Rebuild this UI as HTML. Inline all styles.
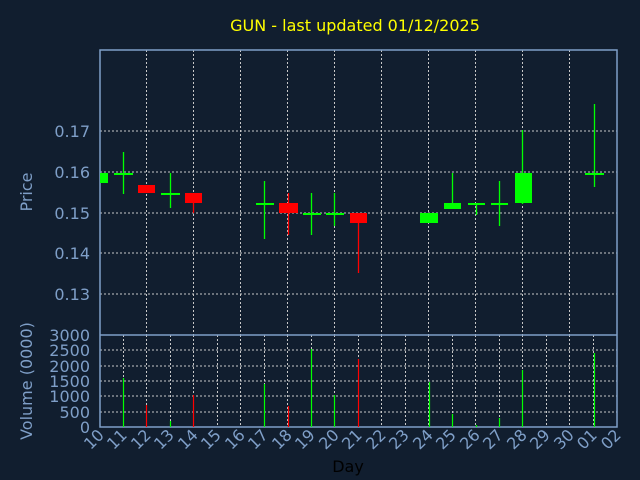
<!DOCTYPE html>
<html><head><meta charset="utf-8"><style>
html,body{margin:0;padding:0;background:#111e2f;}
svg{display:block;font-family:"DejaVu Sans","Liberation Sans",sans-serif;}
</style></head><body>
<svg width="640" height="480" viewBox="0 0 640 480" xmlns="http://www.w3.org/2000/svg">
<rect width="640" height="480" fill="#111e2f"/>
<text x="355" y="31" fill="#ffff00" font-size="16" text-anchor="middle">GUN - last updated 01/12/2025</text>
<g stroke="#c8c8c8" stroke-width="1" stroke-dasharray="2,2" fill="none">
<line x1="100" y1="131" x2="617" y2="131"/><line x1="100" y1="172" x2="617" y2="172"/>
<line x1="100" y1="213" x2="617" y2="213"/><line x1="100" y1="253" x2="617" y2="253"/>
<line x1="100" y1="294" x2="617" y2="294"/>
<line x1="146.5" y1="50" x2="146.5" y2="335"/><line x1="193.5" y1="50" x2="193.5" y2="335"/>
<line x1="240.5" y1="50" x2="240.5" y2="335"/><line x1="287.5" y1="50" x2="287.5" y2="335"/>
<line x1="334.5" y1="50" x2="334.5" y2="335"/><line x1="381.5" y1="50" x2="381.5" y2="335"/>
<line x1="428.5" y1="50" x2="428.5" y2="335"/><line x1="475.5" y1="50" x2="475.5" y2="335"/>
<line x1="522.5" y1="50" x2="522.5" y2="335"/><line x1="569.5" y1="50" x2="569.5" y2="335"/>
<line x1="100" y1="350" x2="617" y2="350"/><line x1="100" y1="366" x2="617" y2="366"/>
<line x1="100" y1="381" x2="617" y2="381"/><line x1="100" y1="396" x2="617" y2="396"/>
<line x1="100" y1="412" x2="617" y2="412"/>
<line x1="123.5" y1="335" x2="123.5" y2="427"/><line x1="146.5" y1="335" x2="146.5" y2="427"/>
<line x1="170.5" y1="335" x2="170.5" y2="427"/><line x1="193.5" y1="335" x2="193.5" y2="427"/>
<line x1="217.5" y1="335" x2="217.5" y2="427"/><line x1="240.5" y1="335" x2="240.5" y2="427"/>
<line x1="264.5" y1="335" x2="264.5" y2="427"/><line x1="287.5" y1="335" x2="287.5" y2="427"/>
<line x1="311.5" y1="335" x2="311.5" y2="427"/><line x1="334.5" y1="335" x2="334.5" y2="427"/>
<line x1="358.5" y1="335" x2="358.5" y2="427"/><line x1="381.5" y1="335" x2="381.5" y2="427"/>
<line x1="405.5" y1="335" x2="405.5" y2="427"/><line x1="428.5" y1="335" x2="428.5" y2="427"/>
<line x1="452.5" y1="335" x2="452.5" y2="427"/><line x1="475.5" y1="335" x2="475.5" y2="427"/>
<line x1="499.5" y1="335" x2="499.5" y2="427"/><line x1="522.5" y1="335" x2="522.5" y2="427"/>
<line x1="546.5" y1="335" x2="546.5" y2="427"/><line x1="569.5" y1="335" x2="569.5" y2="427"/>
<line x1="593.5" y1="335" x2="593.5" y2="427"/>
</g>
<g stroke="#7f9fc8" stroke-width="1.5" fill="none">
<rect x="100" y="50" width="517" height="377"/>
<line x1="100" y1="335" x2="617" y2="335"/>
</g>
<g stroke="#00ff00" stroke-width="1.3">
<line x1="123.5" y1="152" x2="123.5" y2="194"/><line x1="170.5" y1="173" x2="170.5" y2="208"/>
<line x1="264.5" y1="181" x2="264.5" y2="239"/><line x1="311.5" y1="193" x2="311.5" y2="235"/>
<line x1="334.5" y1="193" x2="334.5" y2="226"/><line x1="452.5" y1="173" x2="452.5" y2="209"/>
<line x1="476.5" y1="203" x2="476.5" y2="215"/><line x1="499.5" y1="181" x2="499.5" y2="226"/>
<line x1="522.5" y1="130" x2="522.5" y2="204"/><line x1="594.5" y1="104" x2="594.5" y2="187"/>
</g>
<g fill="#00ff00">
<rect x="100" y="173" width="8" height="10"/>
<rect x="114" y="173" width="19" height="2"/><rect x="161" y="193" width="19" height="2"/>
<rect x="256" y="203" width="18" height="2"/><rect x="303" y="213" width="18" height="2"/>
<rect x="326" y="213" width="18" height="2"/>
<rect x="420" y="213" width="18" height="10"/><rect x="444" y="203" width="17" height="6"/>
<rect x="468" y="203" width="17" height="2"/><rect x="491" y="203" width="17" height="2"/>
<rect x="515" y="173" width="17" height="30"/><rect x="585" y="173" width="19" height="2"/>
</g>
<g stroke="#ff0000" stroke-width="1.3">
<line x1="193.5" y1="193" x2="193.5" y2="213"/><line x1="288.5" y1="193" x2="288.5" y2="235"/>
<line x1="358.5" y1="213" x2="358.5" y2="273"/>
</g>
<g fill="#ff0000">
<rect x="138" y="185" width="17" height="8"/><rect x="185" y="193" width="17" height="10"/>
<rect x="279" y="203" width="19" height="10"/><rect x="350" y="213" width="17" height="10"/>
</g>
<g stroke-width="1.2">
<line x1="123.5" y1="378" x2="123.5" y2="427" stroke="#00ff00"/>
<line x1="146.5" y1="405" x2="146.5" y2="427" stroke="#ff0000"/>
<line x1="170.5" y1="421" x2="170.5" y2="427" stroke="#00ff00"/>
<line x1="193.5" y1="395" x2="193.5" y2="427" stroke="#ff0000"/>
<line x1="264.5" y1="384" x2="264.5" y2="427" stroke="#00ff00"/>
<line x1="288.5" y1="406" x2="288.5" y2="427" stroke="#ff0000"/>
<line x1="311.5" y1="349" x2="311.5" y2="427" stroke="#00ff00"/>
<line x1="334.5" y1="395" x2="334.5" y2="427" stroke="#00ff00"/>
<line x1="358.5" y1="359" x2="358.5" y2="427" stroke="#ff0000"/>
<line x1="429.5" y1="382" x2="429.5" y2="427" stroke="#00ff00"/>
<line x1="452.5" y1="414" x2="452.5" y2="427" stroke="#00ff00"/>
<line x1="476.5" y1="425" x2="476.5" y2="427" stroke="#00ff00"/>
<line x1="499.5" y1="418" x2="499.5" y2="427" stroke="#00ff00"/>
<line x1="522.5" y1="370" x2="522.5" y2="427" stroke="#00ff00"/>
<line x1="594.5" y1="353" x2="594.5" y2="427" stroke="#00ff00"/>
</g>
<g fill="#7f9fc8" font-size="16" text-anchor="end">
<text x="90" y="137">0.17</text><text x="90" y="178">0.16</text><text x="90" y="219">0.15</text>
<text x="90" y="259">0.14</text><text x="90" y="300">0.13</text>
<text x="90" y="341">3000</text><text x="90" y="356">2500</text><text x="90" y="372">2000</text>
<text x="90" y="387">1500</text><text x="90" y="402">1000</text><text x="90" y="418">500</text>
<text x="90" y="433">0</text>
</g>
<text transform="translate(32,192) rotate(-90)" fill="#7f9fc8" font-size="16" text-anchor="middle">Price</text>
<text transform="translate(32,381) rotate(-90)" fill="#7f9fc8" font-size="16" text-anchor="middle">Volume (0000)</text>
<g fill="#7f9fc8" font-size="16" text-anchor="end">
<text transform="translate(105,436) rotate(-45)">10</text><text transform="translate(128,436) rotate(-45)">11</text>
<text transform="translate(152,436) rotate(-45)">12</text><text transform="translate(175,436) rotate(-45)">13</text>
<text transform="translate(199,436) rotate(-45)">14</text><text transform="translate(222,436) rotate(-45)">15</text>
<text transform="translate(246,436) rotate(-45)">16</text><text transform="translate(269,436) rotate(-45)">17</text>
<text transform="translate(293,436) rotate(-45)">18</text><text transform="translate(316,436) rotate(-45)">19</text>
<text transform="translate(340,436) rotate(-45)">20</text><text transform="translate(363,436) rotate(-45)">21</text>
<text transform="translate(387,436) rotate(-45)">22</text><text transform="translate(410,436) rotate(-45)">23</text>
<text transform="translate(434,436) rotate(-45)">24</text><text transform="translate(457,436) rotate(-45)">25</text>
<text transform="translate(481,436) rotate(-45)">26</text><text transform="translate(504,436) rotate(-45)">27</text>
<text transform="translate(528,436) rotate(-45)">28</text><text transform="translate(551,436) rotate(-45)">29</text>
<text transform="translate(575,436) rotate(-45)">30</text><text transform="translate(598,436) rotate(-45)">01</text>
<text transform="translate(622,436) rotate(-45)">02</text>
</g>
<text x="348" y="472" fill="#000000" font-size="16" text-anchor="middle">Day</text>
</svg>
</body></html>
